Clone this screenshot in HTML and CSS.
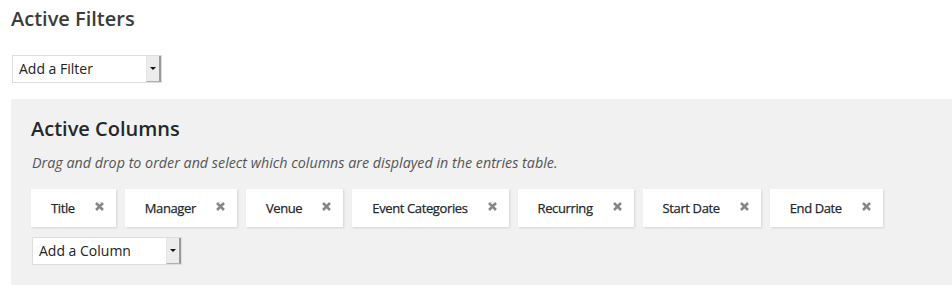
FILE: index.html
```html
<!DOCTYPE html>
<html>
<head>
<meta charset="utf-8">
<link rel="stylesheet" href="styles.css">
</head>
<body>
<h2 class="page-title">Active Filters</h2>
<div class="fake-select filter-select">
  <span class="fake-select-label">Add a Filter</span>
  <span class="fake-select-btn"><span class="caret"></span></span>
</div>
<section class="columns-panel">
  <h2 class="panel-title">Active Columns</h2>
  <p class="panel-desc">Drag and drop to order and select which columns are displayed in the entries table.</p>
  <ul class="tag-list">
    <li class="tag"><span class="tag-label">Title</span><svg class="tag-x" viewBox="0 0 9 9"><path d="M1 1L8 8M8 1L1 8"/></svg></li>
    <li class="tag"><span class="tag-label">Manager</span><svg class="tag-x" viewBox="0 0 9 9"><path d="M1 1L8 8M8 1L1 8"/></svg></li>
    <li class="tag"><span class="tag-label">Venue</span><svg class="tag-x" viewBox="0 0 9 9"><path d="M1 1L8 8M8 1L1 8"/></svg></li>
    <li class="tag"><span class="tag-label">Event Categories</span><svg class="tag-x" viewBox="0 0 9 9"><path d="M1 1L8 8M8 1L1 8"/></svg></li>
    <li class="tag"><span class="tag-label">Recurring</span><svg class="tag-x" viewBox="0 0 9 9"><path d="M1 1L8 8M8 1L1 8"/></svg></li>
    <li class="tag"><span class="tag-label">Start Date</span><svg class="tag-x" viewBox="0 0 9 9"><path d="M1 1L8 8M8 1L1 8"/></svg></li>
    <li class="tag"><span class="tag-label">End Date</span><svg class="tag-x" viewBox="0 0 9 9"><path d="M1 1L8 8M8 1L1 8"/></svg></li>
  </ul>
  <div class="fake-select column-select">
    <span class="fake-select-label">Add a Column</span>
    <span class="fake-select-btn"><span class="caret"></span></span>
  </div>
</section>
</body>
</html>
```
FILE: styles.css
```css
* { box-sizing: border-box; }
html, body {
  margin: 0;
  padding: 0;
  background: #fff;
  font-family: "Open Sans", "Noto Sans", sans-serif;
}
.page-title {
  margin: 6px 0 0 11px;
  font-size: 20px;
  line-height: 26px;
  font-weight: 600;
  color: #3c3c3c;
}
.fake-select {
  display: flex;
  align-items: stretch;
  width: 150px;
  height: 28px;
  border: 1px solid #ddd;
  background: #fff;
}
.filter-select { margin: 23px 0 0 12px; }
.fake-select-label {
  flex: 1;
  padding-left: 6px;
  font-size: 14px;
  line-height: 26px;
  color: #222;
}
.fake-select-btn {
  width: 15px;
  display: flex;
  align-items: center;
  justify-content: center;
  background: #ececec;
  border-left: 1px solid #e4e4e4;
  border-right: 2px solid #9a9a9a;
  border-bottom: 1px solid #b0b0b0;
}
.caret {
  width: 0;
  height: 0;
  border-left: 3px solid transparent;
  border-right: 3px solid transparent;
  border-top: 3px solid #111;
}
.columns-panel {
  margin: 16px 0 0 11px;
  padding: 17px 20px 20px 20px;
  background: #f1f1f1;
}
.panel-title {
  margin: 0;
  font-size: 20px;
  line-height: 26px;
  font-weight: 600;
  color: #23282d;
}
.panel-desc {
  margin: 11px 0 0 1px;
  font-size: 14.3px;
  line-height: 20px;
  font-style: italic;
  color: #555;
}
.tag-list {
  list-style: none;
  margin: 16px 0 0 0;
  padding: 0;
  display: flex;
  flex-wrap: wrap;
  gap: 9px;
}
.tag {
  display: flex;
  align-items: center;
  gap: 20px;
  height: 38px;
  padding: 0 12px 0 20px;
  background: #fff;
  box-shadow: 1px 1px 2px rgba(0, 0, 0, 0.12);
}
.tag-label {
  font-size: 13px;
  line-height: 38px;
  font-weight: 400;
  letter-spacing: -0.38px;
  color: #23282d;
  -webkit-text-stroke: 0.25px #23282d;
}
.tag-x {
  width: 9px;
  height: 9px;
  margin-top: -3px;
  fill: none;
  stroke: #82878c;
  stroke-width: 2.5;
}
.column-select { margin: 10px 0 0 1px; }
```
